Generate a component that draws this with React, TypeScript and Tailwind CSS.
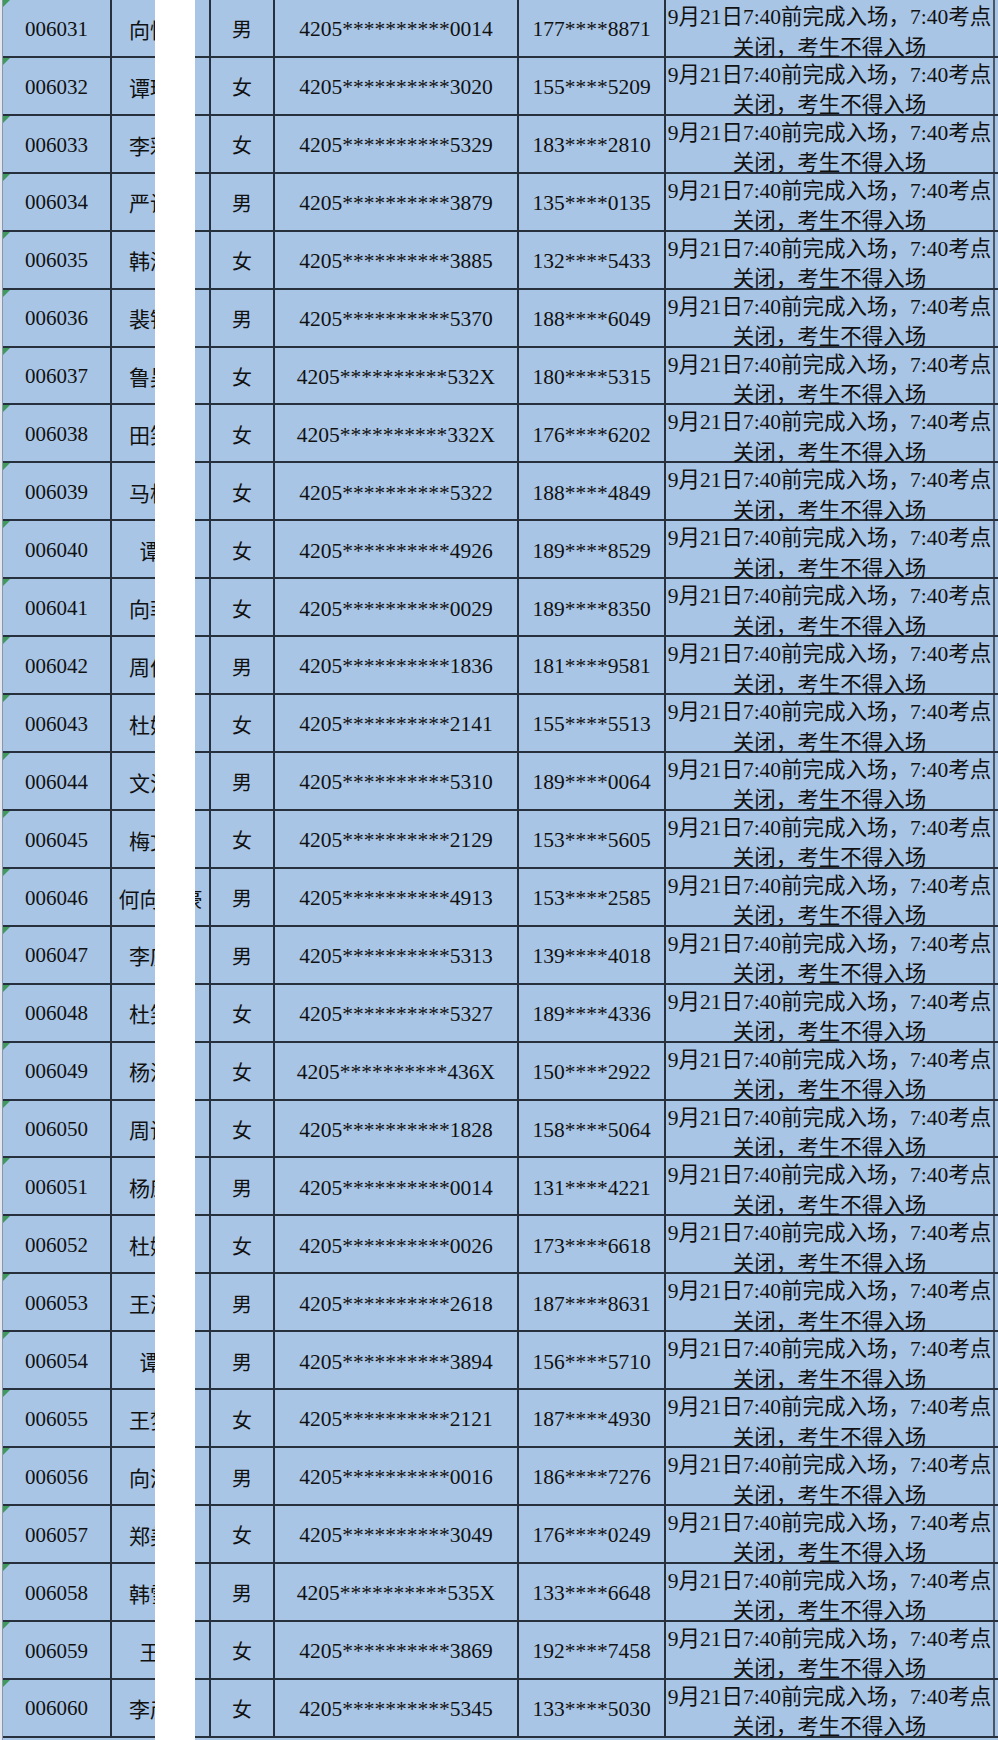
const rows: [string, string, string, string, string][] = [
  ["006031", "向怡然", "男", "0014", "177****8871"],
  ["006032", "谭琳娜", "女", "3020", "155****5209"],
  ["006033", "李彩霞", "女", "5329", "183****2810"],
  ["006034", "严诗雨", "男", "3879", "135****0135"],
  ["006035", "韩沁怡", "女", "3885", "132****5433"],
  ["006036", "裴锦程", "男", "5370", "188****6049"],
  ["006037", "鲁昊雯", "女", "532X", "180****5315"],
  ["006038", "田笑笑", "女", "332X", "176****6202"],
  ["006039", "马松雪", "女", "5322", "188****4849"],
  ["006040", "谭静", "女", "4926", "189****8529"],
  ["006041", "向菲菲", "女", "0029", "189****8350"],
  ["006042", "周俊杰", "男", "1836", "181****9581"],
  ["006043", "杜娟娟", "女", "2141", "155****5513"],
  ["006044", "文浩然", "男", "5310", "189****0064"],
  ["006045", "梅文静", "女", "2129", "153****5605"],
  ["006046", "何向阳豪", "男", "4913", "153****2585"],
  ["006047", "李庆华", "男", "5313", "139****4018"],
  ["006048", "杜笑涵", "女", "5327", "189****4336"],
  ["006049", "杨洁琼", "女", "436X", "150****2922"],
  ["006050", "周诗琪", "女", "1828", "158****5064"],
  ["006051", "杨康宁", "男", "0014", "131****4221"],
  ["006052", "杜娅楠", "女", "0026", "173****6618"],
  ["006053", "王海波", "男", "2618", "187****8631"],
  ["006054", "谭超", "男", "3894", "156****5710"],
  ["006055", "王梦瑶", "女", "2121", "187****4930"],
  ["006056", "向涵宇", "男", "0016", "186****7276"],
  ["006057", "郑美玲", "女", "3049", "176****0249"],
  ["006058", "韩雪峰", "男", "535X", "133****6648"],
  ["006059", "王敏", "女", "3869", "192****7458"],
  ["006060", "李彦琳", "女", "5345", "133****5030"],
];

const serif = "font-['Liberation_Serif','Noto_Sans_CJK_SC',serif]";
const cjk = "font-['Noto_Sans_CJK_SC','Noto_Sans',sans-serif]";
const cell = "flex items-center justify-center pt-[3px] border-r-2 border-r-[#27303d] box-border";

export default function App() {
  return (
    <div className="relative w-[998px] h-[1740px] overflow-hidden bg-[#e4e8ee] pl-[2px]">
      <div className="flex flex-col h-full bg-[#a8c5e6] border-l border-l-[#8a96a8]">
        {rows.map(([no, name, sex, tail, phone]) => (
          <div
            key={no}
            className="flex h-[57.93px] shrink-0 border-b-2 border-b-[#27303d] bg-[#a8c5e6] text-[#111] box-border"
          >
            <div className={`relative w-[109px] text-[21px] ${serif} ${cell}`}>
              <svg className="absolute left-0 top-0" width="7" height="7" viewBox="0 0 7 7">
                <polygon points="0,0 7,0 0,7" fill="#3f9a5c" />
              </svg>
              {no}
            </div>
            <div className={`w-[99px] text-[21px] whitespace-nowrap ${cjk} ${cell}`}>{name}</div>
            <div className={`w-[64px] text-[20px] ${cjk} ${cell}`}>{sex}</div>
            <div className={`w-[244px] text-[21.5px] whitespace-nowrap ${serif} ${cell}`}>
              4205**********{tail}
            </div>
            <div className={`w-[147px] text-[21.5px] whitespace-nowrap ${serif} ${cell}`}>{phone}</div>
            <div
              className={`w-[329px] flex flex-col items-center pt-[2px] text-[21.5px] leading-[30.5px] whitespace-nowrap border-r-2 border-r-[#4a5566] box-border ${serif}`}
            >
              <span>9月21日7:40前完成入场，7:40考点</span>
              <span>关闭，考生不得入场</span>
            </div>
          </div>
        ))}
      </div>
      <div className="absolute left-[155px] top-0 w-[40px] h-full bg-white" />
    </div>
  );
}
